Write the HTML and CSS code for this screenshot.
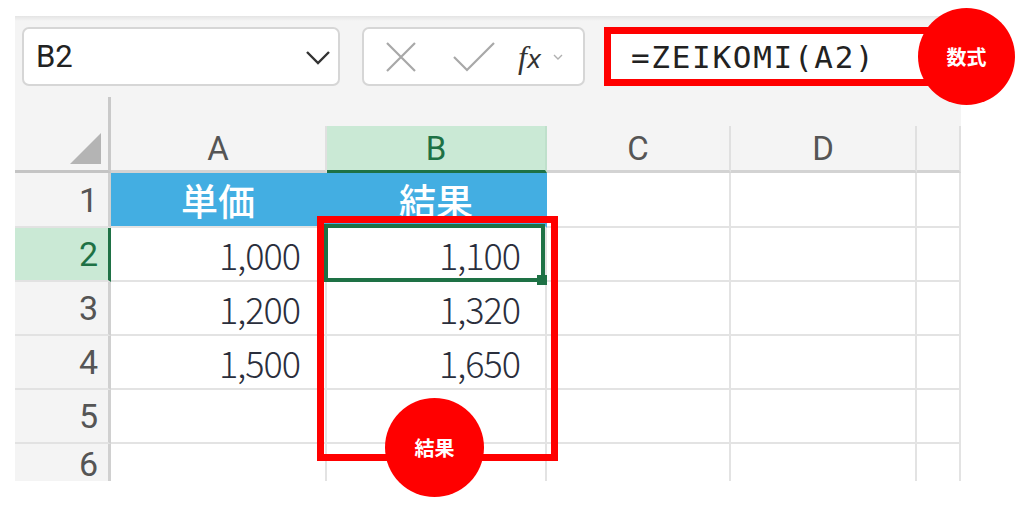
FILE: index.html
```html
<!DOCTYPE html>
<html>
<head>
	<title>ZEIKOMI</title>
	<meta charset="utf-8">
	<link rel="stylesheet" href="styles.css">
</head>
<body>
	<div class="page">
		<div class="app">
			<div class="toolbar">
				<div class="namebox">
					<span>B2</span>
					<svg class="chev" width="26" height="16" viewBox="0 0 26 16"><path d="M2 2 L13 13 L24 2" fill="none" stroke="#333" stroke-width="2.4"/></svg>
				</div>
				<div class="fxbox">
					<svg width="32" height="32" viewBox="0 0 32 32"><path d="M2 2 L30 30 M30 2 L2 30" stroke="#a8a8a8" stroke-width="2.2"/></svg>
					<svg width="44" height="32" viewBox="0 0 44 32"><path d="M2 16 L15 29 L42 2" fill="none" stroke="#a8a8a8" stroke-width="2.2"/></svg>
					<span class="fx"><i>f</i><b>x</b></span>
					<svg width="10" height="8" viewBox="0 0 10 8"><path d="M1 2 L5 6 L9 2" fill="none" stroke="#b0b0b0" stroke-width="1.4"/></svg>
				</div>
				<div class="formula">=ZEIKOMI(A2)</div>
			</div>
			<div class="sheet">
				<div class="corner"><svg width="31" height="31" viewBox="0 0 31 31"><path d="M31 0 L31 31 L0 31 Z" fill="#b4b4b4"/></svg></div>
				<div class="col-head">A</div>
				<div class="col-head on">B</div>
				<div class="col-head">C</div>
				<div class="col-head">D</div>
				<div class="col-head"></div>

				<div class="row-head">1</div>
				<div class="cell title">単価</div>
				<div class="cell title">結果</div>
				<div class="cell"></div>
				<div class="cell"></div>
				<div class="cell"></div>

				<div class="row-head on">2</div>
				<div class="cell num">1,000</div>
				<div class="cell num active">1,100</div>
				<div class="cell"></div>
				<div class="cell"></div>
				<div class="cell"></div>

				<div class="row-head">3</div>
				<div class="cell num">1,200</div>
				<div class="cell num">1,320</div>
				<div class="cell"></div>
				<div class="cell"></div>
				<div class="cell"></div>

				<div class="row-head">4</div>
				<div class="cell num">1,500</div>
				<div class="cell num">1,650</div>
				<div class="cell"></div>
				<div class="cell"></div>
				<div class="cell"></div>

				<div class="row-head">5</div>
				<div class="cell"></div>
				<div class="cell"></div>
				<div class="cell"></div>
				<div class="cell"></div>
				<div class="cell"></div>

				<div class="row-head">6</div>
				<div class="cell"></div>
				<div class="cell"></div>
				<div class="cell"></div>
				<div class="cell"></div>
				<div class="cell"></div>
			</div>
		</div>

		<!-- 注釈 -->
		<div class="mark-range"></div>
		<div class="badge badge-formula">数式</div>
		<div class="badge badge-result">結果</div>
	</div>
</body>
</html>
```

FILE: styles.css
```css
*{margin: 0;padding: 0;box-sizing: border-box;}
html,body{width: 100%;height: 100%;background: #fff;}
.page{position: relative;width: 1024px;height: 516px;padding: 16px 0 0 15px;}
.app{width: 946px;height: 465px;overflow: hidden;background: #f4f4f4;background-image: linear-gradient(#e4e4e4, #f4f4f4 5px);}

.toolbar{display: flex;padding: 11px 7px;height: 81px;}
.namebox{width: 318px;height: 59px;background: #fff;border: 2px solid #d6d6d6;border-radius: 7px;display: flex;align-items: center;justify-content: space-between;padding: 0 7px 0 12px;font-family: Roboto, "Liberation Sans", sans-serif;font-size: 31px;color: #222;}
.namebox .chev{margin-top: 2px;}
.fxbox{width: 223px;height: 59px;margin-left: 22px;background: #fff;border: 2px solid #d6d6d6;border-radius: 7px;display: flex;align-items: center;padding: 0 0 0 21px;}
.fxbox svg:nth-child(2){margin-left: 35px;}
.fx{margin-left: 22px;font-size: 30px;color: #333;line-height: 1;}
.fx i{font-family: "Liberation Serif", serif;font-style: italic;font-size: 32px;}
.fx b{font-family: "DejaVu Sans", sans-serif;font-style: italic;font-weight: 400;font-size: 24px;}
.fxbox svg:last-child{margin-left: 12px;}
.formula{flex: 1;height: 59px;margin-left: 19px;background: #fff;border: 7px solid #f00;padding-left: 20px;display: flex;align-items: center;font-family: "DejaVu Sans Mono", "Liberation Mono", monospace;font-size: 31px;letter-spacing: 1.7px;color: #222;}

.sheet{display: grid;grid-template-columns: 96px 216px 220px 184px 186px 1fr;grid-template-rows: 76px 55px 54px 54px 54px 54px 1fr;height: 384px;font-family: Roboto, "Liberation Sans", sans-serif;}
.corner{background: #f4f4f4;border-right: 3px solid #c9c9c9;border-bottom: 3px solid #c4c4c4;display: flex;align-items: flex-end;justify-content: flex-end;padding: 0 7px 6px 0;}
.col-head{align-self: end;height: 47px;border-right: 2px solid #e0e0e0;border-bottom: 3px solid #d3d3d3;display: flex;align-items: center;justify-content: center;font-size: 33px;color: #555;}
.col-head.on{background: #cae9d5;color: #1e7145;border-bottom-color: #1e7145;border-right-color: #bfe0cb;}
.row-head{background: #f4f4f4;border-right: 3px solid #d0d0d0;border-bottom: 2px solid #e2e2e2;display: flex;align-items: center;justify-content: flex-end;padding-right: 10px;font-size: 34px;color: #555;}
.row-head.on{background: #cae9d5;color: #1e7145;border-right-color: #1e7145;}
.cell{background: #fff;border-right: 2px solid #e3e3e3;border-bottom: 2px solid #e3e3e3;display: flex;align-items: center;}
.cell.title{background: #43aee2;border-right-color: #43aee2;justify-content: center;color: #fff;font-family: "Noto Sans CJK JP", sans-serif;font-weight: 500;font-size: 37px;}
.cell.num{justify-content: flex-end;padding-right: 25px;font-family: "Noto Sans CJK JP", sans-serif;font-weight: 300;font-size: 36px;letter-spacing: -1px;color: #2a2e3c;}
.cell.active{position: relative;}
.cell.active::before{content: "";position: absolute;top: -4px;right: 0;bottom: -2px;left: -3px;border: 4px solid #1e7145;}
.cell.active::after{content: "";position: absolute;right: -2px;bottom: -5px;width: 10px;height: 10px;background: #1e7145;}

.mark-range{position: absolute;left: 317px;top: 216px;width: 241px;height: 245px;border: 7px solid #f00;}
.badge{position: absolute;border-radius: 50%;background: #f00;color: #fff;display: flex;align-items: center;justify-content: center;font-family: "Noto Sans CJK JP", sans-serif;font-weight: 700;font-size: 20px;}
.badge-formula{left: 918px;top: 8px;width: 97px;height: 97px;}
.badge-result{left: 385px;top: 398px;width: 99px;height: 99px;}
```
